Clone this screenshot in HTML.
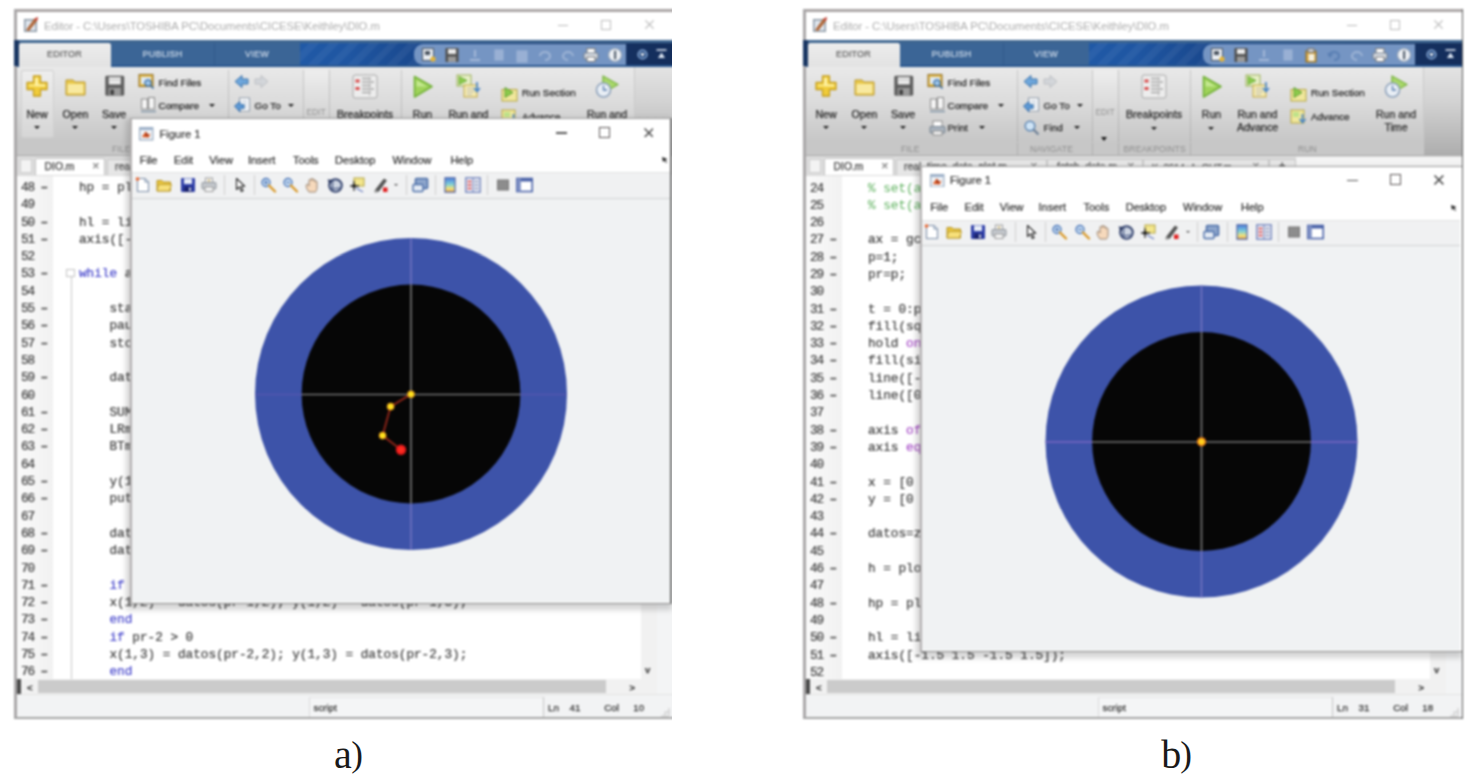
<!DOCTYPE html>
<html lang="en"><head><meta charset="utf-8"><title>Figure</title>
<style>
*{box-sizing:border-box;margin:0;padding:0}
html,body{width:1471px;height:777px;background:#fff;overflow:hidden}
body{position:relative;font-family:"Liberation Sans",sans-serif;font-size:11px;color:#222}
.shot{position:absolute;top:0;width:700px;height:730px;filter:blur(0.8px)}
.abs{position:absolute}
.win{position:absolute;left:14px;top:9px;width:668px;height:710px;background:#fff;overflow:hidden}
.win .bt{position:absolute;left:0;top:0;width:100%;height:2.6px;background:#aba6a6}
.win .bl{position:absolute;left:0;top:0;width:2.6px;height:100%;background:#a9a7a8}
.win .bb{position:absolute;left:0;bottom:0;width:100%;height:2px;background:#a4a4a4}
.win .br{position:absolute;right:0;top:0;width:1.5px;height:100%;background:#5a5a5a}
.title{position:absolute;left:44px;top:20.2px;font-size:11.3px;color:#adadad;white-space:nowrap;letter-spacing:-0.05px}
.cap{position:absolute;font-family:"Liberation Serif",serif;font-size:37px;color:#1a1a1a;line-height:1;white-space:nowrap}
.code{position:absolute;font-family:"Liberation Mono",monospace;font-size:12.7px;color:#3e3e3e;-webkit-text-stroke:0.22px currentColor;white-space:pre;line-height:17.3px}
.kw{color:#4646cc}.st{color:#a850c8}.cm{color:#5cb05c;-webkit-text-stroke:0}
.lbl{position:absolute;font-size:10.6px;color:#262626;-webkit-text-stroke:0.25px #262626;white-space:nowrap;transform:translateX(-50%);text-align:center;line-height:13.4px}
.lblL{position:absolute;font-size:9.9px;color:#262626;-webkit-text-stroke:0.25px #262626;white-space:nowrap;line-height:13px}
.sec{position:absolute;font-size:8.6px;color:#8e8e8e;white-space:nowrap;top:143.6px;letter-spacing:0.1px}
.menu{position:absolute;font-size:11px;color:#2c2c2c;-webkit-text-stroke:0.2px #2c2c2c;white-space:nowrap}
.tri{position:absolute;width:0;height:0;border-left:3.5px solid transparent;border-right:3.5px solid transparent;border-top:3.9px solid #1c1c1c}
.vsep{position:absolute;width:1px;background:rgba(120,120,120,0.28)}
</style></head>
<body>
<div class="abs" style="left:0px;top:0;width:671.9px;height:730px;overflow:hidden"><div class="shot" style="left:0px">
<div class="win" style="width:664px">
<div class="abs" style="left:0;top:0;width:100%;height:31px;background:#fff"></div>
<div class="abs" style="left:-14px;top:-9px;width:700px;height:730px">
<svg class="abs" style="left:23px;top:16px" width="17" height="17" viewBox="0 0 17 17"><rect x="1" y="3" width="13" height="13" fill="#8e9aa6"/><rect x="2.5" y="4.5" width="10" height="10" fill="#dfe6ee"/><path d="M3 14 L11 3 L15 1 L14 5 L6 15 Z" fill="#b0683a"/><path d="M11 3 L15 1 L14 5Z" fill="#c84040"/></svg>
<div class="title">Editor - C:\Users\TOSHIBA PC\Documents\CICESE\Keithley\DIO.m</div>
<div class="abs" style="left:558px;top:24.6px;width:9.5px;height:1.3px;background:#b9b9b9"></div>
<div class="abs" style="left:601px;top:20px;width:9.6px;height:9.6px;border:1.2px solid #bdbdbd"></div>
<svg class="abs" style="left:645px;top:20.3px" width="9" height="9" viewBox="0 0 11 11"><path d="M0.5 0.5L10.5 10.5M10.5 0.5L0.5 10.5" stroke="#b5b5b5" stroke-width="1.3"/></svg>
<div class="abs" style="left:14px;top:39.6px;width:668px;height:27.4px;background:linear-gradient(90deg,#17335f 0%,#17335f 1%,#2059a6 43%,#1f56a2 50%,#19468a 62%,#15305f 93%,#142d5a 100%)"></div>
<div class="abs" style="left:14px;top:39.6px;width:668px;height:3.2px;background:#3f6690"></div>
<div class="abs" style="left:300px;top:43px;width:125px;height:24px;background:repeating-linear-gradient(135deg,rgba(255,255,255,0) 0 7px,rgba(255,255,255,0.05) 7px 14px)"></div>
<div class="abs" style="left:19px;top:43.2px;width:92px;height:24px;background:linear-gradient(#ededed,#e2e2e2);border-radius:2px 2px 0 0"></div>
<div class="abs" style="left:111px;top:43.2px;width:104px;height:22.6px;background:#3b6596;border-right:1px solid #315a8a"></div>
<div class="abs" style="left:215px;top:43.2px;width:85px;height:22.6px;background:#3b6596"></div>
<div class="abs" style="left:14px;top:65.4px;width:668px;height:1.8px;background:#2a578f"></div>
<div class="abs" style="left:19px;top:65px;width:92px;height:2.4px;background:#e3e3e3"></div>
<div class="lbl" style="left:64.5px;top:48px;font-size:9px;color:#5e5e5e;letter-spacing:0.2px;-webkit-text-stroke:0.2px #5e5e5e">EDITOR</div>
<div class="lbl" style="left:162.5px;top:48px;font-size:9px;color:#cfdbea;letter-spacing:0.2px;-webkit-text-stroke:0.2px #cfdbea">PUBLISH</div>
<div class="lbl" style="left:257px;top:48px;font-size:9px;color:#cfdbea;letter-spacing:0.2px;-webkit-text-stroke:0.2px #cfdbea">VIEW</div>
<div class="abs" style="left:414px;top:44px;width:212px;height:20.6px;background:#7595c3;border-radius:9px 0 0 9px"></div>
<svg class="abs" style="left:421.0px;top:46.5px;opacity:1.0" width="16" height="16" viewBox="0 0 16 16"><rect x="1.500" y="1.500" width="11" height="12" fill="#e9edf2" stroke="#4d5661"/><rect x="4" y="4" width="5" height="4" fill="#4d5661"/><circle cx="12" cy="12" r="2.600" fill="#e3b53a"/></svg>
<svg class="abs" style="left:444.2px;top:46.5px;opacity:1.0" width="16" height="16" viewBox="0 0 16 16"><rect x="1.500" y="1" width="13" height="14" rx="1" fill="#4f4f4f"/><rect x="4" y="2" width="8" height="5" fill="#e9e9e9"/><rect x="4" y="9.500" width="8" height="5.500" fill="#9a9a9a"/></svg>
<svg class="abs" style="left:467.4px;top:46.5px;opacity:0.9" width="16" height="16" viewBox="0 0 16 16"><path d="M3 13h10M8 3v7" stroke="#a9bcdb" stroke-width="2"/></svg>
<svg class="abs" style="left:490.6px;top:46.5px;opacity:0.9" width="16" height="16" viewBox="0 0 16 16"><rect x="4" y="3" width="8" height="10" fill="#9db3d6" stroke="#a3b8d8"/></svg>
<svg class="abs" style="left:513.8px;top:46.5px;opacity:0.9" width="16" height="16" viewBox="0 0 16 16"><rect x="3" y="4" width="10" height="11" fill="#9db3d6" stroke="#a3b8d8"/></svg>
<svg class="abs" style="left:537.0px;top:46.5px;opacity:0.9" width="16" height="16" viewBox="0 0 16 16"><path d="M3 9a5 4 0 1 1 5 4" stroke="#a3b8d8" stroke-width="2.200" fill="none"/></svg>
<svg class="abs" style="left:560.2px;top:46.5px;opacity:0.9" width="16" height="16" viewBox="0 0 16 16"><path d="M13 9a5 4 0 1 0-5 4" stroke="#a3b8d8" stroke-width="2" fill="none"/></svg>
<svg class="abs" style="left:583.4px;top:46.5px;opacity:1.0" width="16" height="16" viewBox="0 0 16 16"><rect x="4" y="1.500" width="8" height="5" fill="#fff" stroke="#777"/><rect x="1" y="6" width="14" height="6" rx="1" fill="#d6dbe2" stroke="#6e7884"/><rect x="4" y="10" width="8" height="4.500" fill="#fff" stroke="#777"/></svg>
<svg class="abs" style="left:606.6px;top:46.5px;opacity:1.0" width="16" height="16" viewBox="0 0 16 16"><circle cx="8" cy="8" r="6.500" fill="#eef1f5" stroke="#9aa7b8" stroke-width="1.200"/><rect x="7" y="3.500" width="2.200" height="9" rx="1" fill="#57626f"/></svg>
<svg class="abs" style="left:637px;top:48.500px" width="11" height="11" viewBox="0 0 11 11"><circle cx="5.500" cy="5.500" r="4.300" fill="#1d4279" stroke="#8fb0dc" stroke-width="1.500"/><path d="M3 4.200h5L5.500 7.800z" fill="#ffffff"/></svg>
<svg class="abs" style="left:656px;top:48.500px" width="11" height="11" viewBox="0 0 11 11"><path d="M0.500 1h10" stroke="#dfe8f3" stroke-width="1.600"/><path d="M2 9h7L5.500 3.500z" fill="#dfe8f3"/></svg>
<div class="abs" style="left:14px;top:67px;width:668px;height:75.5px;background:linear-gradient(#e9e9e9 0%,#dcdcdc 45%,#c6c6c6 100%)"></div>
<div class="abs" style="left:14px;top:142.2px;width:668px;height:13.4px;background:#c7c7c7"></div>
<div class="abs" style="left:634px;top:67px;width:48px;height:88.6px;background:linear-gradient(#e3e3e3 0%,#d2d2d2 40%,#b9b9b9 80%,#adadad 100%)"></div>
<div class="abs" style="left:20.5px;top:70px;width:33px;height:68px;border:1px solid #cfcfcf;border-radius:2px;background:linear-gradient(#eeeeee,#d6d6d6)"></div>
<svg class="abs" style="left:26px;top:75.3px" width="22" height="22" viewBox="0 0 22 22"><path d="M7.500 1h7v6.500h6.500v7h-6.500v6.500h-7v-6.500H1v-7h6.500z" fill="#f0cc3a" stroke="#c59f22" stroke-width="1.300" stroke-linejoin="round"/><path d="M9 2.800h3.200v6.400h7v2.400H9z" fill="#fdf0a0"/><path d="M3 9.200h6v2.400H3z" fill="#fae57a"/></svg>
<svg class="abs" style="left:64px;top:76px" width="24" height="22" viewBox="0 0 24 22"><path d="M2 4h7l2 2h10v13H2z" fill="#e9c94c" stroke="#b9962a" stroke-width="1"/><path d="M3.5 8h16v9.500h-16z" fill="#f8e9a0"/></svg>
<svg class="abs" style="left:103.5px;top:75.3px" width="21.5" height="21.5" viewBox="0 0 24 25"><rect x="1" y="1" width="22" height="23" rx="1.5" fill="#5e5e5e"/><rect x="5" y="2.5" width="14" height="8.500" fill="#ececec"/><rect x="5" y="15" width="14" height="9" fill="#9b9b9b"/><rect x="7" y="17" width="4" height="6" fill="#3c3c3c"/><rect x="5" y="5" width="14" height="1.5" fill="#c9c9c9"/></svg>
<div class="lbl" style="left:37px;top:107.5px">New</div><div class="tri" style="left:33.5px;top:126px;border-top-color:#1c1c1c"></div>
<div class="lbl" style="left:75.5px;top:107.5px">Open</div><div class="tri" style="left:72.0px;top:126px;border-top-color:#1c1c1c"></div>
<div class="lbl" style="left:114px;top:107.5px">Save</div><div class="tri" style="left:110.5px;top:126px;border-top-color:#1c1c1c"></div>
<svg class="abs" style="left:138.3px;top:72.800px" width="17" height="16" viewBox="0 0 17 16"><rect x="1" y="1.5" width="14" height="12" fill="#e0b84c" stroke="#8f6d22" stroke-width="1"/><rect x="3" y="4" width="10" height="7" fill="#dfeaf5"/><circle cx="10" cy="10" r="3.2" fill="#9cc4e8" stroke="#3a6ea5" stroke-width="1.2"/><path d="M12.500 12.500l3 3" stroke="#3a6ea5" stroke-width="1.6"/></svg>
<svg class="abs" style="left:139.5px;top:97px" width="17" height="16" viewBox="0 0 17 16"><rect x="1.5" y="2" width="6" height="10" fill="#f4f4f4" stroke="#8a8a8a"/><rect x="8.500" y="0.500" width="6" height="11.500" fill="#f4f4f4" stroke="#8a8a8a"/><path d="M1 14.500h15" stroke="#8899aa" stroke-width="1.6"/></svg>
<svg class="abs" style="left:139.5px;top:119.5px" width="17" height="16" viewBox="0 0 17 16"><rect x="4" y="1" width="9" height="6" fill="#fff" stroke="#8a8a8a"/><rect x="1" y="6.500" width="15" height="6.500" rx="1" fill="#aab4bf" stroke="#76828e"/><rect x="4" y="11" width="9" height="4" fill="#f4f4f4" stroke="#8a8a8a"/></svg>
<div class="lblL" style="left:158.5px;top:75.5px">Find Files</div>
<div class="lblL" style="left:158.5px;top:98.6px">Compare</div><div class="tri" style="left:208.5px;top:103.5px;border-top-color:#1c1c1c"></div>
<div class="lblL" style="left:158.5px;top:121px">Print</div><div class="tri" style="left:189.5px;top:126px;border-top-color:#1c1c1c"></div>
<div class="vsep" style="left:227.6px;top:70px;height:72px"></div>
<svg class="abs" style="left:234px;top:74px" width="36" height="15" viewBox="0 0 36 15"><path d="M1 7.500L8 1.500V5h6v5H8v3.500z" fill="#6ea7dc" stroke="#3b72ab" stroke-width="1"/><path d="M34 7.500L27 1.500V5h-6v5h6v3.500z" fill="#d3d6da" stroke="#bdbfc3" stroke-width="1"/></svg>
<svg class="abs" style="left:234px;top:96.5px" width="17" height="17" viewBox="0 0 17 17"><rect x="5.500" y="1" width="10" height="13" fill="#fff" stroke="#8b98a8"/><path d="M7.500 4.500h6M7.500 7.500h6M7.500 10.500h6" stroke="#9fb2c8"/><path d="M0.500 9L6 4.500V7.500h4v4H6v3.500z" fill="#5e9ad6" stroke="#2f67a3" stroke-width="0.900"/></svg>
<svg class="abs" style="left:234px;top:119px" width="17" height="17" viewBox="0 0 17 17"><circle cx="7" cy="7" r="4.800" fill="#cfe4f6" stroke="#5e86b2" stroke-width="1.500"/><path d="M10.500 10.500l5 5" stroke="#6b7f96" stroke-width="2.200"/></svg>
<div class="lblL" style="left:254.5px;top:98.6px">Go To</div><div class="tri" style="left:288.0px;top:103.5px;border-top-color:#1c1c1c"></div>
<div class="lblL" style="left:254.5px;top:121px">Find</div><div class="tri" style="left:285.0px;top:126px;border-top-color:#1c1c1c"></div>
<div class="vsep" style="left:302.5px;top:70px;height:72px"></div>
<div class="abs" style="left:303.5px;top:70px;width:24px;height:72px;background:linear-gradient(#eeeeee,#d6d6d6 60%,#c9c9c9)"></div>
<div class="lbl" style="left:316px;top:105.5px;font-size:8.4px;color:#929292;-webkit-text-stroke:0">EDIT</div>
<div class="tri" style="left:312px;top:137px;border-left-width:3.8px;border-right-width:3.8px;border-top-width:4px;border-top-color:#111"></div>
<div class="vsep" style="left:328.5px;top:70px;height:72px"></div>
<svg class="abs" style="left:352px;top:74px" width="26" height="25" viewBox="0 0 26 25"><rect x="1" y="1" width="24" height="23" rx="2" fill="#ededed" stroke="#a8a8a8"/><rect x="3.500" y="5.500" width="4" height="3" fill="#d84b4b"/><rect x="3.500" y="13" width="4" height="3" fill="#d84b4b"/><path d="M10 4.500h9M10 8h12M10 11.500h9M10 15h12M10 18.500h9" stroke="#a9a9a9" stroke-width="1.300"/><path d="M17.500 3v19" stroke="#bdbdbd"/></svg>
<div class="lbl" style="left:365px;top:107.5px">Breakpoints</div><div class="tri" style="left:361.5px;top:126.5px;border-top-color:#1c1c1c"></div>
<div class="vsep" style="left:400.5px;top:70px;height:72px"></div>
<svg class="abs" style="left:412px;top:75px" width="22" height="24" viewBox="0 0 22 24"><path d="M2.500 1.500L20 11.500L2.500 22z" fill="#9fd35a" stroke="#74b23a" stroke-width="1.600" stroke-linejoin="round"/><path d="M4.500 5L15 11.500H4.500z" fill="#c4e88f"/></svg>
<div class="lbl" style="left:422.5px;top:107.5px">Run</div><div class="tri" style="left:419.0px;top:126.5px;border-top-color:#1c1c1c"></div>
<svg class="abs" style="left:456px;top:74px" width="25" height="25" viewBox="0 0 25 25"><rect x="1" y="1" width="14" height="11" fill="#e8f0c8" stroke="#9cb05a"/><path d="M3 2.500L11 6.500L3 10.500z" fill="#8ccb4c" stroke="#5fa030" stroke-width="0.800"/><rect x="8" y="11" width="13" height="12" fill="#f3e9b0" stroke="#c2a94a"/><path d="M11 14.500h7M11 17.500h7M11 20.500h5" stroke="#b9b9b9"/><path d="M21 8v9m-3-3l3 3.500l3-3.500" stroke="#4a86c8" stroke-width="1.700" fill="none"/></svg>
<div class="lbl" style="left:468.500px;top:107.5px">Run and<br>Advance</div>
<svg class="abs" style="left:501px;top:86.5px" width="17" height="15" viewBox="0 0 17 15"><rect x="1" y="2.500" width="15" height="11.500" fill="#f0e79c" stroke="#b6a642"/><path d="M4 0.500L12 5.500L4 10.500z" fill="#8ccb4c" stroke="#5a9a2c" stroke-width="0.900"/></svg>
<div class="lblL" style="left:522px;top:86.2px">Run Section</div>
<svg class="abs" style="left:501px;top:108.5px" width="17" height="16" viewBox="0 0 17 16"><rect x="1" y="1" width="13" height="13" fill="#f0e79c" stroke="#b6a642"/><rect x="3" y="3" width="6" height="5" fill="#bfe28a"/><path d="M12.500 5v8m-3-3l3 3.500l3-3.500" stroke="#4a86c8" stroke-width="1.700" fill="none"/></svg>
<div class="lblL" style="left:522px;top:110px">Advance</div>
<svg class="abs" style="left:595px;top:73.500px" width="25" height="26" viewBox="0 0 25 26"><path d="M8 2L23 10.500L8 19z" fill="#a9d86a" stroke="#7cb544" stroke-width="1.400" stroke-linejoin="round"/><circle cx="8.500" cy="16" r="7" fill="#e8eef5" stroke="#8ea2bb" stroke-width="1.600"/><path d="M8.500 11.500V16h3.500" stroke="#5c7fae" stroke-width="1.300" fill="none"/></svg>
<div class="lbl" style="left:607px;top:107.5px">Run and<br>Time</div>
<div class="vsep" style="left:634px;top:67px;height:88px;background:#c9c9c9"></div>
<div class="sec" style="left:112px">FILE</div>
<div class="sec" style="left:241px">NAVIGATE</div>
<div class="sec" style="left:334.5px">BREAKPOINTS</div>
<div class="sec" style="left:509px">RUN</div>
<div class="vsep" style="left:227.6px;top:142.5px;height:13px;background:rgba(120,120,120,0.3)"></div>
<div class="vsep" style="left:302.5px;top:142.5px;height:13px;background:rgba(120,120,120,0.3)"></div>
<div class="vsep" style="left:328.5px;top:142.5px;height:13px;background:rgba(120,120,120,0.3)"></div>
<div class="vsep" style="left:400.5px;top:142.5px;height:13px;background:rgba(120,120,120,0.3)"></div>
<div class="abs" style="left:14px;top:155.4px;width:668px;height:21px;background:#dcdcdc;border-top:1px solid #aaa"></div>
<div class="abs" style="left:20px;top:158.5px;width:11.5px;height:14px;background:#f3f3f3;border:1px solid #cfcfcf"></div>
<div class="abs" style="left:34.5px;top:157.600px;width:70.5px;height:17.500px;background:#fff;border:1px solid #c2c2c2;border-bottom:none;border-radius:2px 2px 0 0"></div>
<div class="lblL" style="left:44.5px;top:159.5px;font-size:10.4px;color:#555">DIO.m</div>
<div class="lblL" style="left:92px;top:160px;font-size:9px;color:#aaa">✕</div>
<div class="abs" style="left:107px;top:158.500px;width:151px;height:16px;background:#e6e6e6;border:1px solid #c6c6c6;border-bottom:none;border-radius:2px 2px 0 0"></div>
<div class="lblL" style="left:115px;top:159.5px;font-size:10.4px;color:#777">real_time_data_plot.m</div>
<div class="lblL" style="left:240.5px;top:160px;font-size:9px;color:#b5b5b5">✕</div>
<div class="abs" style="left:16.5px;top:176.2px;width:666px;height:503.4px;background:#fff"></div>
<div class="abs" style="left:16.5px;top:176.2px;width:36px;height:503.4px;background:linear-gradient(90deg,#fafafa,#f1f1f1)"></div>
<div class="code" style="left:21px;top:179.0px;color:#404040;letter-spacing:-1px">48
49
50
51
52
53
54
55
56
57
58
59
60
61
62
63
64
65
66
67
68
69
70
71
72
73
74
75
76</div>
<div class="code" style="left:40.6px;top:179.0px;color:#555;font-weight:bold">–
 
–
–
 
–
 
–
–
–
 
–
 
–
–
–
 
–
–
 
–
–
 
–
–
–
–
–
–</div>
<div class="code" style="left:79px;top:179.0px">hp = plot(x(1,1),y(1,1),'o');

hl = line(x,y);
axis([-1.5 1.5 -1.5 1.5]);

<span class="kw">while</span> a

    start(ao);
    pause(0.1);
    stop(ao);

    datos(pr,1)=pr;

    SUM = getsample(ai);
    LRminus = SUM(1);
    BTminus = SUM(2);

    y(1,1) = 0;
    putsample(ao,0);

    datos(pr,2)=LR;
    datos(pr,3)=BT;

    <span class="kw">if</span> pr-1 &gt; 0
    x(1,2) = datos(pr-1,2); y(1,2) = datos(pr-1,3);
    <span class="kw">end</span>
    <span class="kw">if</span> pr-2 &gt; 0
    x(1,3) = datos(pr-2,2); y(1,3) = datos(pr-2,3);
    <span class="kw">end</span></div>
<div class="abs" style="left:66px;top:268.500px;width:8.500px;height:8.500px;border:1px solid #c3c3c3;background:#fff"></div>
<div class="abs" style="left:70.500px;top:277px;width:1px;height:402px;background:#c9c9c9"></div>
<div class="abs" style="left:640.5px;top:174.5px;width:16.5px;height:520px;background:#f1f1f1"></div>
<div class="abs" style="left:657px;top:174.5px;width:25px;height:545px;background:#f3f4f5"></div>
<div class="abs" style="left:16.5px;top:679.4px;width:640px;height:14.4px;background:#f1f1f1"></div>
<div class="abs" style="left:38px;top:679.6px;width:568px;height:13.6px;background:#cbcbcb"></div>
<div class="abs" style="left:14px;top:679.4px;width:6.5px;height:14.4px;background:#4a4a4a"></div>
<div class="abs" style="left:16.5px;top:694px;width:666px;height:24px;background:#f2f3f4;border-top:1px solid #e3e3e3"></div>
<div class="abs" style="left:309px;top:696.500px;width:234px;height:20px;background:#f4f5f6;border-left:1px solid #dadada;border-top:1px solid #e6e6e6"></div>
<div class="lblL" style="left:313.5px;top:700.5px;font-size:9.8px;color:#444">script</div>
<div class="abs" style="left:542.7px;top:696.500px;width:1.2px;height:20px;background:#c4c4c4"></div>
<div class="lblL" style="left:548px;top:700.5px;font-size:9.8px;color:#444">Ln</div>
<div class="lblL" style="left:569.6px;top:700.5px;font-size:9.8px;color:#444">41</div>
<div class="lblL" style="left:604.3px;top:700.5px;font-size:9.8px;color:#444">Col</div>
<div class="lblL" style="left:633.3px;top:700.5px;font-size:9.8px;color:#444">10</div>
<div class="lblL" style="left:27px;top:680.5px;font-size:9.5px;color:#555;font-weight:bold">&lt;</div>
<div class="lblL" style="left:629.500px;top:680.5px;font-size:9.5px;color:#555;font-weight:bold">&gt;</div>
<div class="lblL" style="left:645px;top:663px;font-size:9.5px;color:#555;font-weight:bold">v</div>
<svg class="abs" style="left:660px;top:707px" width="10" height="10" viewBox="0 0 10 10"><path d="M9 1v8H1M9 5H5v4" stroke="#c4c4c4" stroke-width="1" fill="none"/></svg>
<div class="abs" style="left:126px;top:118.8px;width:546px;height:491px;background:rgba(70,70,70,0.22);filter:blur(2.6px)"></div>
<div class="abs" style="left:130px;top:117.8px;width:542px;height:486px;background:#fff;border-left:2.1px solid #b3b0b0;border-bottom:1.8px solid #8a8a8a;border-right:2.4px solid #707070;border-top:0.8px solid #9f9f9f"></div>
<div class="abs" style="left:132.1px;top:171.8px;width:537.5px;height:27.6px;background:#f0f1f2;border-top:1px solid #e2e2e2;border-bottom:1.3px solid #d2d3d4"></div>
<div class="abs" style="left:132.1px;top:199.4px;width:537.5px;height:402.59999999999997px;background:#f0f2f3"></div>
<svg class="abs" style="left:139.4px;top:127.0px" width="14.5" height="13.6" viewBox="0 0 16 15"><rect x="0.700" y="0.700" width="14.600" height="13.600" fill="#eef2f6" stroke="#8fa2b8" stroke-width="1.200"/><rect x="0.700" y="0.700" width="14.600" height="2.600" fill="#9fb3cc"/><path d="M3 11L7.500 5L10 8.500L12.500 7L11 11.500z" fill="#d9541e"/><path d="M7.500 5L10 8.500L8 11z" fill="#8a2a16"/></svg>
<div class="menu" style="left:159.4px;top:127.6px;font-size:11.2px;color:#333">Figure 1</div>
<div class="abs" style="left:556.2px;top:132.29999999999998px;width:10.500px;height:1.500px;background:#555"></div>
<div class="abs" style="left:598.7px;top:127.0px;width:11px;height:11px;border:1.500px solid #5c5656"></div>
<svg class="abs" style="left:643.5px;top:127.5px" width="9.8" height="9.8" viewBox="0 0 11 11"><path d="M0.500 0.500L10.500 10.500M10.500 0.500L0.500 10.500" stroke="#4a4a4a" stroke-width="1.700"/></svg>
<div class="menu" style="left:139.70000000000002px;top:154.2px">File</div>
<div class="menu" style="left:174.0px;top:154.2px">Edit</div>
<div class="menu" style="left:209.20000000000002px;top:154.2px">View</div>
<div class="menu" style="left:247.9px;top:154.2px">Insert</div>
<div class="menu" style="left:292.9px;top:154.2px">Tools</div>
<div class="menu" style="left:335.09999999999997px;top:154.2px">Desktop</div>
<div class="menu" style="left:392.4px;top:154.2px">Window</div>
<div class="menu" style="left:450.4px;top:154.2px">Help</div>
<svg class="abs" style="left:662px;top:156.8px" width="6" height="6" viewBox="0 0 6 6"><path d="M0 0L5.500 2L3.500 3L5 5.500L4 6L2.800 3.600L1 5z" fill="#222"/></svg>
<svg class="abs" style="left:135px;top:176.7px" width="16" height="16" viewBox="0 0 16 16"><path d="M2.500 1.500h7.500l3.500 3.500v9.500h-11z" fill="#fff" stroke="#7d8fa8" stroke-width="1.100"/><path d="M10 1.500v3.500h3.500" fill="#dbe4ef" stroke="#7d8fa8"/><circle cx="2.500" cy="2" r="1.800" fill="#e9632c"/></svg>
<svg class="abs" style="left:155.84px;top:176.7px" width="16" height="16" viewBox="0 0 16 16"><path d="M1 3.500h5l1.500 1.500h7v9H1z" fill="#e9c63f" stroke="#b49224"/><path d="M2.500 7.500h13l-2 6.500H1z" fill="#f7e07a" stroke="#b49224" stroke-width="0.800"/></svg>
<svg class="abs" style="left:179.94px;top:176.7px" width="16" height="16" viewBox="0 0 16 16"><rect x="1" y="1" width="14" height="14" rx="1" fill="#2f3fa8"/><rect x="4" y="1.500" width="8" height="5.500" fill="#e9eef8"/><rect x="4" y="9.500" width="8" height="5.500" fill="#1b2470"/><rect x="9" y="10.500" width="2" height="3.500" fill="#cfd6ee"/></svg>
<svg class="abs" style="left:200.84px;top:176.7px" width="16" height="16" viewBox="0 0 16 16"><rect x="4.500" y="1" width="7" height="5" fill="#fff" stroke="#9a9a9a"/><rect x="1" y="5.500" width="14" height="6.500" rx="1" fill="#c5c9ce" stroke="#8c9198"/><rect x="4" y="10" width="8" height="4.500" fill="#f6f6f6" stroke="#9a9a9a"/><circle cx="8" cy="3.500" r="1.300" fill="#c7b37a"/></svg>
<div class="vsep" style="left:223.8px;top:175.0px;height:20px;background:#cfcfcf"></div>
<svg class="abs" style="left:233.8px;top:176.7px" width="12" height="16" viewBox="0 0 12 16"><path d="M2.500 1.500v11l2.800-2.600l2 4.600l1.800-.8l-2-4.500h3.600z" fill="#fff" stroke="#222" stroke-width="1.100" stroke-linejoin="round"/></svg>
<div class="vsep" style="left:253.8px;top:175.0px;height:20px;background:#cfcfcf"></div>
<svg class="abs" style="left:259.8px;top:176.7px" width="17" height="16" viewBox="0 0 17 16"><circle cx="6" cy="5.500" r="4" fill="#cfe3f7" stroke="#4d78b8" stroke-width="1.400"/><path d="M4 5.500h4M6 3.500v4" stroke="#3b65a8" stroke-width="1"/><path d="M9 8.500l6 6" stroke="#d99a2b" stroke-width="2.400" stroke-linecap="round"/></svg>
<svg class="abs" style="left:282.3px;top:176.7px" width="17" height="16" viewBox="0 0 17 16"><circle cx="6" cy="5.500" r="4" fill="#cfe3f7" stroke="#4d78b8" stroke-width="1.400"/><path d="M4 5.500h4" stroke="#3b65a8" stroke-width="1"/><path d="M9 8.500l6 6" stroke="#d99a2b" stroke-width="2.400" stroke-linecap="round"/></svg>
<svg class="abs" style="left:304.8px;top:176.7px" width="17" height="16" viewBox="0 0 17 16"><path d="M4 15c-2.500-3-3.500-6-2.500-7.500c1-1 2 .5 2.500 1.500V3.500c0-1.500 2-1.500 2 0V2.500c0-1.500 2-1.500 2 0v1c0-1.500 2-1.500 2 0v1.500c0-1.300 2-1.300 2 0v6c0 2-1 3-1.500 4z" fill="#f6d9bc" stroke="#8f7a68" stroke-width="0.900"/></svg>
<svg class="abs" style="left:326.8px;top:176.7px" width="17" height="16" viewBox="0 0 17 16"><circle cx="8.500" cy="8.500" r="6.300" fill="#cdd5e2" stroke="#36456f" stroke-width="2"/><path d="M2 8.500a6.500 3 0 0 0 13 0M8.500 2a3 6.500 0 0 0 0 13" stroke="#4a5a84" stroke-width="1.200" fill="none"/><path d="M0.500 2.500l5 .5L3 8z" fill="#26345e"/></svg>
<svg class="abs" style="left:348.8px;top:176.7px" width="16" height="16" viewBox="0 0 16 16"><rect x="5" y="1" width="10" height="8" fill="#f3e68c" stroke="#b3a440"/><path d="M1 9h9M5 4v10" stroke="#333" stroke-width="1.300"/><rect x="3.500" y="7.500" width="3" height="3" fill="#111"/><path d="M7 11l7 4" stroke="#6d7fc0" stroke-width="1.300"/></svg>
<svg class="abs" style="left:372.8px;top:176.7px" width="16" height="16" viewBox="0 0 16 16"><path d="M2 13.500L11 2l2.500 1.500L5.500 14.500z" fill="#555" stroke="#333" stroke-width="0.600"/><path d="M1 15c1-2 2.500-2.500 4.500-.5c-1.500 1.500-3 1.500-4.500.5z" fill="#9c9c9c"/><rect x="10" y="10.500" width="4.500" height="4.500" fill="#e02020"/></svg>
<div class="tri" style="left:394.3px;top:183.5px;border-left-width:2.200px;border-right-width:2.200px;border-top-width:2.600px;border-top-color:#555"></div>
<div class="vsep" style="left:405.8px;top:175.0px;height:20px;background:#cfcfcf"></div>
<svg class="abs" style="left:411.8px;top:176.7px" width="17" height="16" viewBox="0 0 17 16"><rect x="3.500" y="1.500" width="12" height="10" rx="1" fill="#8ea6cc" stroke="#4d6fa8" stroke-width="1.600"/><rect x="1" y="7.500" width="10" height="7" rx="1" fill="#e4ebf5" stroke="#4d6fa8" stroke-width="1.400"/></svg>
<div class="vsep" style="left:435.3px;top:175.0px;height:20px;background:#cfcfcf"></div>
<svg class="abs" style="left:444.3px;top:176.7px" width="12" height="16" viewBox="0 0 12 16"><defs><linearGradient id="cb" x1="0" y1="0" x2="0" y2="1"><stop offset="0" stop-color="#4a7be0"/><stop offset="0.450" stop-color="#7fd0d8"/><stop offset="0.750" stop-color="#f2e27a"/><stop offset="1" stop-color="#e9a04a"/></linearGradient></defs><rect x="1" y="0.800" width="10" height="14.400" fill="url(#cb)" stroke="#5a6ea8" stroke-width="1.300"/></svg>
<svg class="abs" style="left:464.8px;top:176.7px" width="16" height="16" viewBox="0 0 16 16"><rect x="0.800" y="0.800" width="14.400" height="14.400" fill="#eef1f8" stroke="#6d7fb8" stroke-width="1.300"/><path d="M8 1v14" stroke="#6d7fb8"/><path d="M2.500 4.500h4M2.500 8h4M2.500 11.500h4" stroke="#d83a3a" stroke-width="1.600"/><path d="M9.500 4.500h4M9.500 8h4M9.500 11.500h4" stroke="#8a94b8" stroke-width="1.300"/></svg>
<div class="vsep" style="left:486.5px;top:175.0px;height:20px;background:#cfcfcf"></div>
<svg class="abs" style="left:496.8px;top:176.7px" width="12" height="16" viewBox="0 0 12 16"><rect x="0.500" y="3" width="11" height="10" fill="#8d8d8d" stroke="#777"/></svg>
<svg class="abs" style="left:515.8px;top:176.7px" width="17" height="16" viewBox="0 0 17 16"><rect x="0.800" y="1.500" width="15.400" height="13" fill="#fff" stroke="#4a62a8" stroke-width="1.600"/><rect x="0.800" y="1.500" width="15.400" height="3" fill="#4a62a8"/><rect x="0.800" y="1.500" width="4" height="13" fill="#7d8fc4"/></svg>
<svg class="abs" style="left:130px;top:198.8px" width="542" height="403" viewBox="130 198.8 542 403">
<circle cx="411.0" cy="393.8" r="156" fill="#3d53a9"/>
<circle cx="411.0" cy="393.8" r="109.4" fill="#060606"/>
<path d="M255.0 394.3H302.0M520.0 394.3H567.0" stroke="#4f56ae" stroke-width="2.2"/><path d="M411.0 237.8V284.8M411.0 502.8V549.8" stroke="#7b78c4" stroke-width="1.3"/>
<path d="M301.6 394.3H520.4M411.0 284.4V503.20000000000005" stroke="#727272" stroke-width="1.7"/>
<path d="M411.0 394.0 L390.6 406.4 L382.6 435.4 L401.0 449.6" stroke="#8a2418" stroke-width="2" fill="none"/><circle cx="411.0" cy="394.0" r="3.800" fill="#e8a21c"/><circle cx="411.0" cy="394.0" r="2.500" fill="#ffe81e"/><circle cx="390.6" cy="406.4" r="3.800" fill="#e8a21c"/><circle cx="390.6" cy="406.4" r="2.500" fill="#ffe81e"/><circle cx="382.6" cy="435.4" r="3.800" fill="#e8a21c"/><circle cx="382.6" cy="435.4" r="2.500" fill="#ffe81e"/><circle cx="401.0" cy="449.6" r="5.200" fill="#e21a1a"/><circle cx="401.0" cy="449.6" r="3" fill="#ff2d22"/>
</svg>
</div>
<div class="bt"></div><div class="bl"></div><div class="bb"></div>
<div class="abs" style="left:0;top:30.6px;width:5px;height:26.4px;background:#1a3763"></div>
</div>
</div></div>
<div class="abs" style="left:789px;top:0;width:682px;height:730px;overflow:hidden"><div class="shot" style="left:0px">
<div class="win" style="width:660px">
<div class="abs" style="left:0;top:0;width:100%;height:31px;background:#fff"></div>
<div class="abs" style="left:-14px;top:-9px;width:700px;height:730px">
<svg class="abs" style="left:23px;top:16px" width="17" height="17" viewBox="0 0 17 17"><rect x="1" y="3" width="13" height="13" fill="#8e9aa6"/><rect x="2.5" y="4.5" width="10" height="10" fill="#dfe6ee"/><path d="M3 14 L11 3 L15 1 L14 5 L6 15 Z" fill="#b0683a"/><path d="M11 3 L15 1 L14 5Z" fill="#c84040"/></svg>
<div class="title">Editor - C:\Users\TOSHIBA PC\Documents\CICESE\Keithley\DIO.m</div>
<div class="abs" style="left:558px;top:24.6px;width:9.5px;height:1.3px;background:#b9b9b9"></div>
<div class="abs" style="left:601px;top:20px;width:9.6px;height:9.6px;border:1.2px solid #bdbdbd"></div>
<svg class="abs" style="left:645px;top:20.3px" width="9" height="9" viewBox="0 0 11 11"><path d="M0.5 0.5L10.5 10.5M10.5 0.5L0.5 10.5" stroke="#b5b5b5" stroke-width="1.3"/></svg>
<div class="abs" style="left:14px;top:39.6px;width:668px;height:27.4px;background:linear-gradient(90deg,#17335f 0%,#17335f 1%,#2059a6 43%,#1f56a2 50%,#19468a 62%,#15305f 93%,#142d5a 100%)"></div>
<div class="abs" style="left:14px;top:39.6px;width:668px;height:3.2px;background:#3f6690"></div>
<div class="abs" style="left:300px;top:43px;width:125px;height:24px;background:repeating-linear-gradient(135deg,rgba(255,255,255,0) 0 7px,rgba(255,255,255,0.05) 7px 14px)"></div>
<div class="abs" style="left:19px;top:43.2px;width:92px;height:24px;background:linear-gradient(#ededed,#e2e2e2);border-radius:2px 2px 0 0"></div>
<div class="abs" style="left:111px;top:43.2px;width:104px;height:22.6px;background:#3b6596;border-right:1px solid #315a8a"></div>
<div class="abs" style="left:215px;top:43.2px;width:85px;height:22.6px;background:#3b6596"></div>
<div class="abs" style="left:14px;top:65.4px;width:668px;height:1.8px;background:#2a578f"></div>
<div class="abs" style="left:19px;top:65px;width:92px;height:2.4px;background:#e3e3e3"></div>
<div class="lbl" style="left:64.5px;top:48px;font-size:9px;color:#5e5e5e;letter-spacing:0.2px;-webkit-text-stroke:0.2px #5e5e5e">EDITOR</div>
<div class="lbl" style="left:162.5px;top:48px;font-size:9px;color:#cfdbea;letter-spacing:0.2px;-webkit-text-stroke:0.2px #cfdbea">PUBLISH</div>
<div class="lbl" style="left:257px;top:48px;font-size:9px;color:#cfdbea;letter-spacing:0.2px;-webkit-text-stroke:0.2px #cfdbea">VIEW</div>
<div class="abs" style="left:414px;top:44px;width:212px;height:20.6px;background:#7595c3;border-radius:9px 0 0 9px"></div>
<svg class="abs" style="left:421.0px;top:46.5px;opacity:1.0" width="16" height="16" viewBox="0 0 16 16"><rect x="1.500" y="1.500" width="11" height="12" fill="#e9edf2" stroke="#4d5661"/><rect x="4" y="4" width="5" height="4" fill="#4d5661"/><circle cx="12" cy="12" r="2.600" fill="#e3b53a"/></svg>
<svg class="abs" style="left:444.2px;top:46.5px;opacity:1.0" width="16" height="16" viewBox="0 0 16 16"><rect x="1.500" y="1" width="13" height="14" rx="1" fill="#4f4f4f"/><rect x="4" y="2" width="8" height="5" fill="#e9e9e9"/><rect x="4" y="9.500" width="8" height="5.500" fill="#9a9a9a"/></svg>
<svg class="abs" style="left:467.4px;top:46.5px;opacity:0.9" width="16" height="16" viewBox="0 0 16 16"><path d="M3 13h10M8 3v7" stroke="#a9bcdb" stroke-width="2"/></svg>
<svg class="abs" style="left:490.6px;top:46.5px;opacity:0.9" width="16" height="16" viewBox="0 0 16 16"><rect x="4" y="3" width="8" height="10" fill="#9db3d6" stroke="#a3b8d8"/></svg>
<svg class="abs" style="left:513.8px;top:46.5px;opacity:1.0" width="16" height="16" viewBox="0 0 16 16"><rect x="3" y="4" width="10" height="11" fill="#d9a43a" stroke="#8a6a24"/><rect x="5" y="1.500" width="6" height="4" fill="#c9c9c9" stroke="#777"/><rect x="5.500" y="7" width="6" height="7" fill="#f4f0e0"/></svg>
<svg class="abs" style="left:537.0px;top:46.5px;opacity:1.0" width="16" height="16" viewBox="0 0 16 16"><path d="M3 9a5 4 0 1 1 5 4" stroke="#5a7fb3" stroke-width="2.200" fill="none"/><path d="M1 6l3 5l3-4z" fill="#5a7fb3"/></svg>
<svg class="abs" style="left:560.2px;top:46.5px;opacity:0.9" width="16" height="16" viewBox="0 0 16 16"><path d="M13 9a5 4 0 1 0-5 4" stroke="#a3b8d8" stroke-width="2" fill="none"/></svg>
<svg class="abs" style="left:583.4px;top:46.5px;opacity:1.0" width="16" height="16" viewBox="0 0 16 16"><rect x="4" y="1.500" width="8" height="5" fill="#fff" stroke="#777"/><rect x="1" y="6" width="14" height="6" rx="1" fill="#d6dbe2" stroke="#6e7884"/><rect x="4" y="10" width="8" height="4.500" fill="#fff" stroke="#777"/></svg>
<svg class="abs" style="left:606.6px;top:46.5px;opacity:1.0" width="16" height="16" viewBox="0 0 16 16"><circle cx="8" cy="8" r="6.500" fill="#eef1f5" stroke="#9aa7b8" stroke-width="1.200"/><rect x="7" y="3.500" width="2.200" height="9" rx="1" fill="#57626f"/></svg>
<svg class="abs" style="left:637px;top:48.500px" width="11" height="11" viewBox="0 0 11 11"><circle cx="5.500" cy="5.500" r="4.300" fill="#1d4279" stroke="#8fb0dc" stroke-width="1.500"/><path d="M3 4.200h5L5.500 7.800z" fill="#ffffff"/></svg>
<svg class="abs" style="left:656px;top:48.500px" width="11" height="11" viewBox="0 0 11 11"><path d="M0.500 1h10" stroke="#dfe8f3" stroke-width="1.600"/><path d="M2 9h7L5.500 3.500z" fill="#dfe8f3"/></svg>
<div class="abs" style="left:14px;top:67px;width:668px;height:75.5px;background:linear-gradient(#e9e9e9 0%,#dcdcdc 45%,#c6c6c6 100%)"></div>
<div class="abs" style="left:14px;top:142.2px;width:668px;height:13.4px;background:#c7c7c7"></div>
<div class="abs" style="left:634px;top:67px;width:48px;height:88.6px;background:linear-gradient(#e3e3e3 0%,#d2d2d2 40%,#b9b9b9 80%,#adadad 100%)"></div>
<svg class="abs" style="left:26px;top:75.3px" width="22" height="22" viewBox="0 0 22 22"><path d="M7.500 1h7v6.500h6.500v7h-6.500v6.500h-7v-6.500H1v-7h6.500z" fill="#f0cc3a" stroke="#c59f22" stroke-width="1.300" stroke-linejoin="round"/><path d="M9 2.800h3.200v6.400h7v2.400H9z" fill="#fdf0a0"/><path d="M3 9.200h6v2.400H3z" fill="#fae57a"/></svg>
<svg class="abs" style="left:64px;top:76px" width="24" height="22" viewBox="0 0 24 22"><path d="M2 4h7l2 2h10v13H2z" fill="#e9c94c" stroke="#b9962a" stroke-width="1"/><path d="M3.5 8h16v9.500h-16z" fill="#f8e9a0"/></svg>
<svg class="abs" style="left:103.5px;top:75.3px" width="21.5" height="21.5" viewBox="0 0 24 25"><rect x="1" y="1" width="22" height="23" rx="1.5" fill="#5e5e5e"/><rect x="5" y="2.5" width="14" height="8.500" fill="#ececec"/><rect x="5" y="15" width="14" height="9" fill="#9b9b9b"/><rect x="7" y="17" width="4" height="6" fill="#3c3c3c"/><rect x="5" y="5" width="14" height="1.5" fill="#c9c9c9"/></svg>
<div class="lbl" style="left:37px;top:107.5px">New</div><div class="tri" style="left:33.5px;top:126px;border-top-color:#1c1c1c"></div>
<div class="lbl" style="left:75.5px;top:107.5px">Open</div><div class="tri" style="left:72.0px;top:126px;border-top-color:#1c1c1c"></div>
<div class="lbl" style="left:114px;top:107.5px">Save</div><div class="tri" style="left:110.5px;top:126px;border-top-color:#1c1c1c"></div>
<svg class="abs" style="left:138.3px;top:72.800px" width="17" height="16" viewBox="0 0 17 16"><rect x="1" y="1.5" width="14" height="12" fill="#e0b84c" stroke="#8f6d22" stroke-width="1"/><rect x="3" y="4" width="10" height="7" fill="#dfeaf5"/><circle cx="10" cy="10" r="3.2" fill="#9cc4e8" stroke="#3a6ea5" stroke-width="1.2"/><path d="M12.500 12.500l3 3" stroke="#3a6ea5" stroke-width="1.6"/></svg>
<svg class="abs" style="left:139.5px;top:97px" width="17" height="16" viewBox="0 0 17 16"><rect x="1.5" y="2" width="6" height="10" fill="#f4f4f4" stroke="#8a8a8a"/><rect x="8.500" y="0.500" width="6" height="11.500" fill="#f4f4f4" stroke="#8a8a8a"/><path d="M1 14.500h15" stroke="#8899aa" stroke-width="1.6"/></svg>
<svg class="abs" style="left:139.5px;top:119.5px" width="17" height="16" viewBox="0 0 17 16"><rect x="4" y="1" width="9" height="6" fill="#fff" stroke="#8a8a8a"/><rect x="1" y="6.500" width="15" height="6.500" rx="1" fill="#aab4bf" stroke="#76828e"/><rect x="4" y="11" width="9" height="4" fill="#f4f4f4" stroke="#8a8a8a"/></svg>
<div class="lblL" style="left:158.5px;top:75.5px">Find Files</div>
<div class="lblL" style="left:158.5px;top:98.6px">Compare</div><div class="tri" style="left:208.5px;top:103.5px;border-top-color:#1c1c1c"></div>
<div class="lblL" style="left:158.5px;top:121px">Print</div><div class="tri" style="left:189.5px;top:126px;border-top-color:#1c1c1c"></div>
<div class="vsep" style="left:227.6px;top:70px;height:72px"></div>
<svg class="abs" style="left:234px;top:74px" width="36" height="15" viewBox="0 0 36 15"><path d="M1 7.500L8 1.500V5h6v5H8v3.500z" fill="#6ea7dc" stroke="#3b72ab" stroke-width="1"/><path d="M34 7.500L27 1.500V5h-6v5h6v3.500z" fill="#d3d6da" stroke="#bdbfc3" stroke-width="1"/></svg>
<svg class="abs" style="left:234px;top:96.5px" width="17" height="17" viewBox="0 0 17 17"><rect x="5.500" y="1" width="10" height="13" fill="#fff" stroke="#8b98a8"/><path d="M7.500 4.500h6M7.500 7.500h6M7.500 10.500h6" stroke="#9fb2c8"/><path d="M0.500 9L6 4.500V7.500h4v4H6v3.500z" fill="#5e9ad6" stroke="#2f67a3" stroke-width="0.900"/></svg>
<svg class="abs" style="left:234px;top:119px" width="17" height="17" viewBox="0 0 17 17"><circle cx="7" cy="7" r="4.800" fill="#cfe4f6" stroke="#5e86b2" stroke-width="1.500"/><path d="M10.500 10.500l5 5" stroke="#6b7f96" stroke-width="2.200"/></svg>
<div class="lblL" style="left:254.5px;top:98.6px">Go To</div><div class="tri" style="left:288.0px;top:103.5px;border-top-color:#1c1c1c"></div>
<div class="lblL" style="left:254.5px;top:121px">Find</div><div class="tri" style="left:285.0px;top:126px;border-top-color:#1c1c1c"></div>
<div class="vsep" style="left:302.5px;top:70px;height:72px"></div>
<div class="abs" style="left:303.5px;top:70px;width:24px;height:72px;background:linear-gradient(#eeeeee,#d6d6d6 60%,#c9c9c9)"></div>
<div class="lbl" style="left:316px;top:105.5px;font-size:8.4px;color:#929292;-webkit-text-stroke:0">EDIT</div>
<div class="tri" style="left:312px;top:137px;border-left-width:3.8px;border-right-width:3.8px;border-top-width:4px;border-top-color:#111"></div>
<div class="vsep" style="left:328.5px;top:70px;height:72px"></div>
<svg class="abs" style="left:352px;top:74px" width="26" height="25" viewBox="0 0 26 25"><rect x="1" y="1" width="24" height="23" rx="2" fill="#ededed" stroke="#a8a8a8"/><rect x="3.500" y="5.500" width="4" height="3" fill="#d84b4b"/><rect x="3.500" y="13" width="4" height="3" fill="#d84b4b"/><path d="M10 4.500h9M10 8h12M10 11.500h9M10 15h12M10 18.500h9" stroke="#a9a9a9" stroke-width="1.300"/><path d="M17.500 3v19" stroke="#bdbdbd"/></svg>
<div class="lbl" style="left:365px;top:107.5px">Breakpoints</div><div class="tri" style="left:361.5px;top:126.5px;border-top-color:#1c1c1c"></div>
<div class="vsep" style="left:400.5px;top:70px;height:72px"></div>
<svg class="abs" style="left:412px;top:75px" width="22" height="24" viewBox="0 0 22 24"><path d="M2.500 1.500L20 11.500L2.500 22z" fill="#9fd35a" stroke="#74b23a" stroke-width="1.600" stroke-linejoin="round"/><path d="M4.500 5L15 11.500H4.500z" fill="#c4e88f"/></svg>
<div class="lbl" style="left:422.5px;top:107.5px">Run</div><div class="tri" style="left:419.0px;top:126.5px;border-top-color:#1c1c1c"></div>
<svg class="abs" style="left:456px;top:74px" width="25" height="25" viewBox="0 0 25 25"><rect x="1" y="1" width="14" height="11" fill="#e8f0c8" stroke="#9cb05a"/><path d="M3 2.500L11 6.500L3 10.500z" fill="#8ccb4c" stroke="#5fa030" stroke-width="0.800"/><rect x="8" y="11" width="13" height="12" fill="#f3e9b0" stroke="#c2a94a"/><path d="M11 14.500h7M11 17.500h7M11 20.500h5" stroke="#b9b9b9"/><path d="M21 8v9m-3-3l3 3.500l3-3.500" stroke="#4a86c8" stroke-width="1.700" fill="none"/></svg>
<div class="lbl" style="left:468.500px;top:107.5px">Run and<br>Advance</div>
<svg class="abs" style="left:501px;top:86.5px" width="17" height="15" viewBox="0 0 17 15"><rect x="1" y="2.500" width="15" height="11.500" fill="#f0e79c" stroke="#b6a642"/><path d="M4 0.500L12 5.500L4 10.500z" fill="#8ccb4c" stroke="#5a9a2c" stroke-width="0.900"/></svg>
<div class="lblL" style="left:522px;top:86.2px">Run Section</div>
<svg class="abs" style="left:501px;top:108.5px" width="17" height="16" viewBox="0 0 17 16"><rect x="1" y="1" width="13" height="13" fill="#f0e79c" stroke="#b6a642"/><rect x="3" y="3" width="6" height="5" fill="#bfe28a"/><path d="M12.500 5v8m-3-3l3 3.500l3-3.500" stroke="#4a86c8" stroke-width="1.700" fill="none"/></svg>
<div class="lblL" style="left:522px;top:110px">Advance</div>
<svg class="abs" style="left:595px;top:73.500px" width="25" height="26" viewBox="0 0 25 26"><path d="M8 2L23 10.500L8 19z" fill="#a9d86a" stroke="#7cb544" stroke-width="1.400" stroke-linejoin="round"/><circle cx="8.500" cy="16" r="7" fill="#e8eef5" stroke="#8ea2bb" stroke-width="1.600"/><path d="M8.500 11.500V16h3.500" stroke="#5c7fae" stroke-width="1.300" fill="none"/></svg>
<div class="lbl" style="left:607px;top:107.5px">Run and<br>Time</div>
<div class="vsep" style="left:634px;top:67px;height:88px;background:#c9c9c9"></div>
<div class="sec" style="left:112px">FILE</div>
<div class="sec" style="left:241px">NAVIGATE</div>
<div class="sec" style="left:334.5px">BREAKPOINTS</div>
<div class="sec" style="left:509px">RUN</div>
<div class="vsep" style="left:227.6px;top:142.5px;height:13px;background:rgba(120,120,120,0.3)"></div>
<div class="vsep" style="left:302.5px;top:142.5px;height:13px;background:rgba(120,120,120,0.3)"></div>
<div class="vsep" style="left:328.5px;top:142.5px;height:13px;background:rgba(120,120,120,0.3)"></div>
<div class="vsep" style="left:400.5px;top:142.5px;height:13px;background:rgba(120,120,120,0.3)"></div>
<div class="abs" style="left:14px;top:155.4px;width:668px;height:21px;background:#dcdcdc;border-top:1px solid #aaa"></div>
<div class="abs" style="left:20px;top:158.5px;width:11.5px;height:14px;background:#f3f3f3;border:1px solid #cfcfcf"></div>
<div class="abs" style="left:34.5px;top:157.600px;width:70.5px;height:17.500px;background:#fff;border:1px solid #c2c2c2;border-bottom:none;border-radius:2px 2px 0 0"></div>
<div class="lblL" style="left:44.5px;top:159.5px;font-size:10.4px;color:#555">DIO.m</div>
<div class="lblL" style="left:92px;top:160px;font-size:9px;color:#aaa">✕</div>
<div class="abs" style="left:107px;top:158.500px;width:151px;height:16px;background:#e6e6e6;border:1px solid #c6c6c6;border-bottom:none;border-radius:2px 2px 0 0"></div>
<div class="lblL" style="left:115px;top:159.5px;font-size:10.4px;color:#777">real_time_data_plot.m</div>
<div class="lblL" style="left:240.5px;top:160px;font-size:9px;color:#b5b5b5">✕</div>
<div class="abs" style="left:258px;top:158.500px;width:96px;height:16px;background:#e6e6e6;border:1px solid #c6c6c6;border-bottom:none"></div>
<div class="lblL" style="left:268px;top:159.5px;font-size:10.4px;color:#888">fetch_data.m</div>
<div class="lblL" style="left:337.5px;top:160px;font-size:9px;color:#b5b5b5">✕</div>
<div class="abs" style="left:354px;top:158.500px;width:125.5px;height:16px;background:#e6e6e6;border:1px solid #c6c6c6;border-bottom:none"></div>
<div class="lblL" style="left:362.7px;top:159.5px;font-size:9.6px;color:#888">K_2614_A_OUT.m</div>
<div class="lblL" style="left:463px;top:160px;font-size:9px;color:#b5b5b5">✕</div>
<div class="abs" style="left:479.5px;top:158.500px;width:27px;height:16px;background:#e6e6e6;border:1px solid #c6c6c6;border-bottom:none"></div>
<div class="lblL" style="left:490px;top:158.500px;font-size:11px;color:#555">+</div>
<div class="abs" style="left:506.8px;top:157px;width:166px;height:9px;background:#f4f4f4"></div>
<div class="abs" style="left:16.5px;top:176.2px;width:666px;height:503.4px;background:#fff"></div>
<div class="abs" style="left:16.5px;top:176.2px;width:36px;height:503.4px;background:linear-gradient(90deg,#fafafa,#f1f1f1)"></div>
<div class="code" style="left:21px;top:179.5px;color:#404040;letter-spacing:-1px">24
25
26
27
28
29
30
31
32
33
34
35
36
37
38
39
40
41
42
43
44
45
46
47
48
49
50
51
52</div>
<div class="code" style="left:40.6px;top:179.5px;color:#555;font-weight:bold"> 
 
 
–
–
–
 
–
–
–
–
–
–
 
–
–
 
–
–
 
–
 
–
 
–
 
–
–
 </div>
<div class="code" style="left:79px;top:179.5px"><span class="cm">% set(ax,'XLim',[-1.5 1.5]);</span>
<span class="cm">% set(ax,'YLim',[-1.5 1.5]);</span>

ax = gca;
p=1;
pr=p;

t = 0:pi/50:2*pi;
fill(sqrt(2.25)*sin(t),sqrt(2.25)*cos(t),'b');
hold <span class="st">on</span>
fill(sin(t),cos(t),'k');
line([-1.5 1.5],[0 0]);
line([0 0],[-1.5 1.5]);

axis <span class="st">off</span>
axis <span class="st">equal</span>

x = [0 0 0];
y = [0 0 0];

datos=zeros(1,3);

h = plot(x,y,'r');

hp = plot(x(1,1),y(1,1),'o');

hl = line(x,y);
axis([-1.5 1.5 -1.5 1.5]);
</div>
<div class="abs" style="left:640.5px;top:174.5px;width:16.5px;height:520px;background:#f1f1f1"></div>
<div class="abs" style="left:657px;top:174.5px;width:25px;height:545px;background:#f3f4f5"></div>
<div class="abs" style="left:16.5px;top:679.4px;width:640px;height:14.4px;background:#f1f1f1"></div>
<div class="abs" style="left:38px;top:679.6px;width:568px;height:13.6px;background:#cbcbcb"></div>
<div class="abs" style="left:14px;top:679.4px;width:6.5px;height:14.4px;background:#4a4a4a"></div>
<div class="abs" style="left:16.5px;top:694px;width:666px;height:24px;background:#f2f3f4;border-top:1px solid #e3e3e3"></div>
<div class="abs" style="left:309px;top:696.500px;width:234px;height:20px;background:#f4f5f6;border-left:1px solid #dadada;border-top:1px solid #e6e6e6"></div>
<div class="lblL" style="left:313.5px;top:700.5px;font-size:9.8px;color:#444">script</div>
<div class="abs" style="left:542.7px;top:696.500px;width:1.2px;height:20px;background:#c4c4c4"></div>
<div class="lblL" style="left:548px;top:700.5px;font-size:9.8px;color:#444">Ln</div>
<div class="lblL" style="left:569.6px;top:700.5px;font-size:9.8px;color:#444">31</div>
<div class="lblL" style="left:604.3px;top:700.5px;font-size:9.8px;color:#444">Col</div>
<div class="lblL" style="left:633.3px;top:700.5px;font-size:9.8px;color:#444">18</div>
<div class="lblL" style="left:27px;top:680.5px;font-size:9.5px;color:#555;font-weight:bold">&lt;</div>
<div class="lblL" style="left:629.500px;top:680.5px;font-size:9.5px;color:#555;font-weight:bold">&gt;</div>
<div class="lblL" style="left:645px;top:663px;font-size:9.5px;color:#555;font-weight:bold">v</div>
<svg class="abs" style="left:660px;top:707px" width="10" height="10" viewBox="0 0 10 10"><path d="M9 1v8H1M9 5H5v4" stroke="#c4c4c4" stroke-width="1" fill="none"/></svg>
<div class="abs" style="left:127px;top:166.8px;width:546.4px;height:491px;background:rgba(70,70,70,0.22);filter:blur(2.6px)"></div>
<div class="abs" style="left:131px;top:165.8px;width:542.4px;height:486px;background:#fff;border-left:2.1px solid #b3b0b0;border-bottom:1.8px solid #8a8a8a;border-right:0px solid #707070;border-top:0.8px solid #9f9f9f"></div>
<div class="abs" style="left:133.1px;top:219.8px;width:537.9px;height:25.8px;background:#f0f1f2;border-top:1px solid #e2e2e2;border-bottom:1.3px solid #d2d3d4"></div>
<div class="abs" style="left:133.1px;top:245.60000000000002px;width:537.9px;height:404.4px;background:#f0f2f3"></div>
<svg class="abs" style="left:141px;top:173.8px" width="14.5" height="13.6" viewBox="0 0 16 15"><rect x="0.700" y="0.700" width="14.600" height="13.600" fill="#eef2f6" stroke="#8fa2b8" stroke-width="1.200"/><rect x="0.700" y="0.700" width="14.600" height="2.600" fill="#9fb3cc"/><path d="M3 11L7.500 5L10 8.500L12.500 7L11 11.500z" fill="#d9541e"/><path d="M7.500 5L10 8.500L8 11z" fill="#8a2a16"/></svg>
<div class="menu" style="left:161px;top:174.4px;font-size:11.2px;color:#333">Figure 1</div>
<div class="abs" style="left:558px;top:179.60000000000002px;width:10.500px;height:1.500px;background:#555"></div>
<div class="abs" style="left:600.5px;top:174.3px;width:11px;height:11px;border:1.500px solid #5c5656"></div>
<svg class="abs" style="left:645.3px;top:174.8px" width="9.8" height="9.8" viewBox="0 0 11 11"><path d="M0.500 0.500L10.500 10.500M10.500 0.500L0.500 10.500" stroke="#4a4a4a" stroke-width="1.700"/></svg>
<div class="menu" style="left:141.3px;top:201.0px">File</div>
<div class="menu" style="left:175.6px;top:201.0px">Edit</div>
<div class="menu" style="left:210.8px;top:201.0px">View</div>
<div class="menu" style="left:249.5px;top:201.0px">Insert</div>
<div class="menu" style="left:294.5px;top:201.0px">Tools</div>
<div class="menu" style="left:336.7px;top:201.0px">Desktop</div>
<div class="menu" style="left:394px;top:201.0px">Window</div>
<div class="menu" style="left:452px;top:201.0px">Help</div>
<svg class="abs" style="left:662px;top:204.8px" width="6" height="6" viewBox="0 0 6 6"><path d="M0 0L5.500 2L3.500 3L5 5.500L4 6L2.800 3.600L1 5z" fill="#222"/></svg>
<svg class="abs" style="left:135px;top:224.0px" width="16" height="16" viewBox="0 0 16 16"><path d="M2.500 1.500h7.500l3.500 3.500v9.500h-11z" fill="#fff" stroke="#7d8fa8" stroke-width="1.100"/><path d="M10 1.500v3.500h3.500" fill="#dbe4ef" stroke="#7d8fa8"/><circle cx="2.500" cy="2" r="1.800" fill="#e9632c"/></svg>
<svg class="abs" style="left:156.5px;top:224.0px" width="16" height="16" viewBox="0 0 16 16"><path d="M1 3.500h5l1.500 1.500h7v9H1z" fill="#e9c63f" stroke="#b49224"/><path d="M2.500 7.500h13l-2 6.500H1z" fill="#f7e07a" stroke="#b49224" stroke-width="0.800"/></svg>
<svg class="abs" style="left:180.6px;top:224.0px" width="16" height="16" viewBox="0 0 16 16"><rect x="1" y="1" width="14" height="14" rx="1" fill="#2f3fa8"/><rect x="4" y="1.500" width="8" height="5.500" fill="#e9eef8"/><rect x="4" y="9.500" width="8" height="5.500" fill="#1b2470"/><rect x="9" y="10.500" width="2" height="3.500" fill="#cfd6ee"/></svg>
<svg class="abs" style="left:201.5px;top:224.0px" width="16" height="16" viewBox="0 0 16 16"><rect x="4.500" y="1" width="7" height="5" fill="#fff" stroke="#9a9a9a"/><rect x="1" y="5.500" width="14" height="6.500" rx="1" fill="#c5c9ce" stroke="#8c9198"/><rect x="4" y="10" width="8" height="4.500" fill="#f6f6f6" stroke="#9a9a9a"/><circle cx="8" cy="3.500" r="1.300" fill="#c7b37a"/></svg>
<div class="vsep" style="left:226px;top:222.3px;height:20px;background:#cfcfcf"></div>
<svg class="abs" style="left:236px;top:224.0px" width="12" height="16" viewBox="0 0 12 16"><path d="M2.500 1.500v11l2.800-2.600l2 4.600l1.800-.8l-2-4.500h3.600z" fill="#fff" stroke="#222" stroke-width="1.100" stroke-linejoin="round"/></svg>
<div class="vsep" style="left:256px;top:222.3px;height:20px;background:#cfcfcf"></div>
<svg class="abs" style="left:262px;top:224.0px" width="17" height="16" viewBox="0 0 17 16"><circle cx="6" cy="5.500" r="4" fill="#cfe3f7" stroke="#4d78b8" stroke-width="1.400"/><path d="M4 5.500h4M6 3.500v4" stroke="#3b65a8" stroke-width="1"/><path d="M9 8.500l6 6" stroke="#d99a2b" stroke-width="2.400" stroke-linecap="round"/></svg>
<svg class="abs" style="left:284.5px;top:224.0px" width="17" height="16" viewBox="0 0 17 16"><circle cx="6" cy="5.500" r="4" fill="#cfe3f7" stroke="#4d78b8" stroke-width="1.400"/><path d="M4 5.500h4" stroke="#3b65a8" stroke-width="1"/><path d="M9 8.500l6 6" stroke="#d99a2b" stroke-width="2.400" stroke-linecap="round"/></svg>
<svg class="abs" style="left:307px;top:224.0px" width="17" height="16" viewBox="0 0 17 16"><path d="M4 15c-2.500-3-3.500-6-2.500-7.500c1-1 2 .5 2.500 1.500V3.500c0-1.500 2-1.500 2 0V2.500c0-1.500 2-1.500 2 0v1c0-1.500 2-1.500 2 0v1.500c0-1.300 2-1.300 2 0v6c0 2-1 3-1.500 4z" fill="#f6d9bc" stroke="#8f7a68" stroke-width="0.900"/></svg>
<svg class="abs" style="left:329px;top:224.0px" width="17" height="16" viewBox="0 0 17 16"><circle cx="8.500" cy="8.500" r="6.300" fill="#cdd5e2" stroke="#36456f" stroke-width="2"/><path d="M2 8.500a6.500 3 0 0 0 13 0M8.500 2a3 6.500 0 0 0 0 13" stroke="#4a5a84" stroke-width="1.200" fill="none"/><path d="M0.500 2.500l5 .5L3 8z" fill="#26345e"/></svg>
<svg class="abs" style="left:351px;top:224.0px" width="16" height="16" viewBox="0 0 16 16"><rect x="5" y="1" width="10" height="8" fill="#f3e68c" stroke="#b3a440"/><path d="M1 9h9M5 4v10" stroke="#333" stroke-width="1.300"/><rect x="3.500" y="7.500" width="3" height="3" fill="#111"/><path d="M7 11l7 4" stroke="#6d7fc0" stroke-width="1.300"/></svg>
<svg class="abs" style="left:375px;top:224.0px" width="16" height="16" viewBox="0 0 16 16"><path d="M2 13.500L11 2l2.500 1.500L5.500 14.500z" fill="#555" stroke="#333" stroke-width="0.600"/><path d="M1 15c1-2 2.500-2.500 4.500-.5c-1.500 1.500-3 1.500-4.500.5z" fill="#9c9c9c"/><rect x="10" y="10.500" width="4.500" height="4.500" fill="#e02020"/></svg>
<div class="tri" style="left:396.5px;top:230.8px;border-left-width:2.200px;border-right-width:2.200px;border-top-width:2.600px;border-top-color:#555"></div>
<div class="vsep" style="left:408px;top:222.3px;height:20px;background:#cfcfcf"></div>
<svg class="abs" style="left:414px;top:224.0px" width="17" height="16" viewBox="0 0 17 16"><rect x="3.500" y="1.500" width="12" height="10" rx="1" fill="#8ea6cc" stroke="#4d6fa8" stroke-width="1.600"/><rect x="1" y="7.500" width="10" height="7" rx="1" fill="#e4ebf5" stroke="#4d6fa8" stroke-width="1.400"/></svg>
<div class="vsep" style="left:437.5px;top:222.3px;height:20px;background:#cfcfcf"></div>
<svg class="abs" style="left:446.5px;top:224.0px" width="12" height="16" viewBox="0 0 12 16"><defs><linearGradient id="cb" x1="0" y1="0" x2="0" y2="1"><stop offset="0" stop-color="#4a7be0"/><stop offset="0.450" stop-color="#7fd0d8"/><stop offset="0.750" stop-color="#f2e27a"/><stop offset="1" stop-color="#e9a04a"/></linearGradient></defs><rect x="1" y="0.800" width="10" height="14.400" fill="url(#cb)" stroke="#5a6ea8" stroke-width="1.300"/></svg>
<svg class="abs" style="left:467px;top:224.0px" width="16" height="16" viewBox="0 0 16 16"><rect x="0.800" y="0.800" width="14.400" height="14.400" fill="#eef1f8" stroke="#6d7fb8" stroke-width="1.300"/><path d="M8 1v14" stroke="#6d7fb8"/><path d="M2.500 4.500h4M2.500 8h4M2.500 11.500h4" stroke="#d83a3a" stroke-width="1.600"/><path d="M9.500 4.500h4M9.500 8h4M9.500 11.500h4" stroke="#8a94b8" stroke-width="1.300"/></svg>
<div class="vsep" style="left:488.7px;top:222.3px;height:20px;background:#cfcfcf"></div>
<svg class="abs" style="left:499px;top:224.0px" width="12" height="16" viewBox="0 0 12 16"><rect x="0.500" y="3" width="11" height="10" fill="#8d8d8d" stroke="#777"/></svg>
<svg class="abs" style="left:518px;top:224.0px" width="17" height="16" viewBox="0 0 17 16"><rect x="0.800" y="1.500" width="15.400" height="13" fill="#fff" stroke="#4a62a8" stroke-width="1.600"/><rect x="0.800" y="1.500" width="15.400" height="3" fill="#4a62a8"/><rect x="0.800" y="1.500" width="4" height="13" fill="#7d8fc4"/></svg>
<svg class="abs" style="left:131px;top:246.8px" width="542.4" height="403" viewBox="131 246.8 542.4 403">
<circle cx="412.5" cy="441.3" r="156" fill="#3d53a9"/>
<circle cx="412.5" cy="441.3" r="109.4" fill="#060606"/>
<path d="M256.5 441.8H303.5M521.5 441.8H568.5" stroke="#7a66c2" stroke-width="1.3"/><path d="M412.5 285.3V332.3M412.5 550.3V597.3" stroke="#7b78c4" stroke-width="1.3"/>
<path d="M303.1 441.8H521.9M412.5 331.9V550.7" stroke="#727272" stroke-width="1.7"/>
<circle cx="412.5" cy="441.6" r="4.600" fill="#ea7a18"/><circle cx="412.5" cy="441.6" r="3" fill="#ffd21e"/>
</svg>
</div>
<div class="bt"></div><div class="bl"></div><div class="bb"></div>
<div class="abs" style="left:0;top:30.6px;width:5px;height:26.4px;background:#1a3763"></div>
<div class="br"></div>
</div>
</div></div>
<div class="cap" style="left:334px;top:734.5px;font-size:40px">a<span style="font-size:35px;position:relative;top:-1.5px;left:-0.5px">)</span></div>
<div class="cap" style="left:1161.3px;top:734.5px;font-size:40px">b<span style="font-size:35px;position:relative;top:-1.5px;left:-1px">)</span></div>
</body></html>
